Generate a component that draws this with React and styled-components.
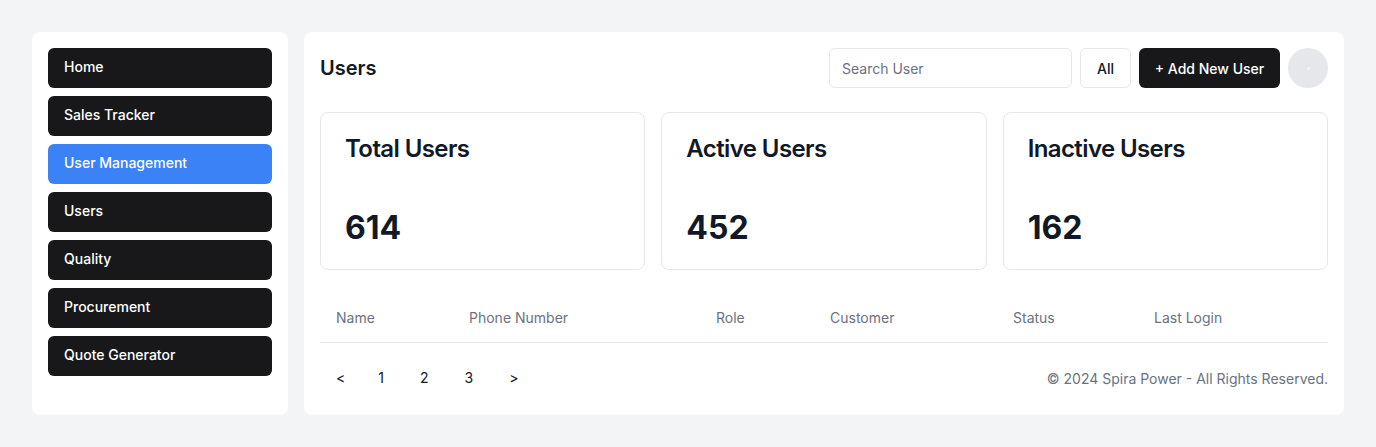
import React from "react"
import styled, { createGlobalStyle } from "styled-components"

const GlobalStyle = createGlobalStyle`
	* { box-sizing: border-box; }
	body {
		margin: 0;
		background: #f3f4f6;
		font-family: Inter, "Noto Sans", sans-serif;
		color: #111827;
	}
`

const Page = styled.div`
	display: flex;
	gap: 16px;
	padding: 32px;
	align-items: stretch;
`

const Sidebar = styled.nav`
	width: 256px;
	flex-shrink: 0;
	background: #fff;
	border-radius: 8px;
	padding: 16px;
	display: flex;
	flex-direction: column;
	gap: 8px;
`

const NavButton = styled.button`
	height: 40px;
	border: none;
	border-radius: 6px;
	background: ${(p) => (p.active ? "#3b82f6" : "#18181b")};
	color: #fff;
	font-family: inherit;
	font-size: 14px;
	font-weight: 500;
	text-align: left;
	padding: 0 16px 3px;
`

const Main = styled.main`
	flex: 1;
	background: #fff;
	border-radius: 8px;
	padding: 16px 16px 19px;
	display: flex;
	flex-direction: column;
`

const Header = styled.div`
	display: flex;
	align-items: center;
	justify-content: space-between;
	height: 40px;
`

const Title = styled.h1`
	margin: 0;
	font-size: 20px;
	font-weight: 600;
`

const Actions = styled.div`
	display: flex;
	align-items: center;
	gap: 8px;
`

const SearchInput = styled.input`
	width: 243px;
	height: 40px;
	border: 1px solid #e5e7eb;
	border-radius: 6px;
	padding: 0 12px;
	font-family: inherit;
	font-size: 14px;
	color: #111827;
	&::placeholder { color: #6b7280; }
`

const OutlineButton = styled.button`
	height: 40px;
	width: 51px;
	border: 1px solid #e5e7eb;
	border-radius: 6px;
	background: #fff;
	font-family: inherit;
	font-size: 14px;
	font-weight: 500;
	color: #111827;
`

const DarkButton = styled.button`
	height: 40px;
	width: 141px;
	border: none;
	border-radius: 6px;
	background: #18181b;
	color: #fff;
	font-family: inherit;
	font-size: 14px;
	font-weight: 500;
`

const Avatar = styled.div`
	width: 40px;
	height: 40px;
	border-radius: 50%;
	background: #e5e7eb;
	display: flex;
	align-items: center;
	justify-content: center;
	&::after {
		content: "";
		width: 3px;
		height: 3px;
		border-radius: 50%;
		background: #f3f4f6;
	}
`

const Cards = styled.div`
	display: grid;
	grid-template-columns: repeat(3, 1fr);
	gap: 16px;
	margin-top: 24px;
`

const Card = styled.div`
	border: 1px solid #e5e7eb;
	border-radius: 8px;
	padding: 20px 24px 21px;
	height: 158px;
	display: flex;
	flex-direction: column;
	justify-content: space-between;
`

const CardTitle = styled.h2`
	margin: 0;
	font-size: 24px;
	font-weight: 600;
	line-height: 32px;
	letter-spacing: -0.6px;
`

const CardValue = styled.div`
	font-size: 32px;
	font-weight: 700;
	line-height: 40px;
`

const Table = styled.table`
	width: 100%;
	border-collapse: collapse;
	margin-top: 28px;
	table-layout: fixed;
`

const Th = styled.th`
	text-align: left;
	font-size: 14px;
	font-weight: 400;
	color: #6b7280;
	padding: 10px 16px 14px;
	line-height: 20px;
	border-bottom: 1px solid #e5e7eb;
	width: ${(p) => p.w || "auto"};
`

const Footer = styled.div`
	display: flex;
	align-items: center;
	justify-content: space-between;
	margin-top: 17px;
`

const Pager = styled.div`
	display: flex;
	gap: 4px;
`

const PageButton = styled.button`
	background: none;
	border: none;
	font-family: inherit;
	font-size: 14px;
	color: #111827;
	padding: 8px 16px;
	line-height: 20px;
	&:first-child { padding-right: 13px; }
`

const Copy = styled.div`
	font-size: 14px;
	color: #6b7280;
`

const nav = ["Home", "Sales Tracker", "User Management", "Users", "Quality", "Procurement", "Quote Generator"]
const stats = [
	["Total Users", 614],
	["Active Users", 452],
	["Inactive Users", 162],
]
const cols = [
	["Name", "133px"],
	["Phone Number", "247px"],
	["Role", "114px"],
	["Customer", "183px"],
	["Status", "141px"],
	["Last Login", "auto"],
]

const App = () => {
	return (
		<>
			<GlobalStyle />
			<Page>
				<Sidebar>
					{nav.map((n) => (
						<NavButton key={n} active={n === "User Management"}>
							{n}
						</NavButton>
					))}
				</Sidebar>
				<Main>
					<Header>
						<Title>Users</Title>
						<Actions>
							<SearchInput placeholder="Search User" />
							<OutlineButton>All</OutlineButton>
							<DarkButton>+ Add New User</DarkButton>
							<Avatar />
						</Actions>
					</Header>
					<Cards>
						{stats.map(([t, v]) => (
							<Card key={t}>
								<CardTitle>{t}</CardTitle>
								<CardValue>{v}</CardValue>
							</Card>
						))}
					</Cards>
					<Table>
						<thead>
							<tr>
								{cols.map(([c, w]) => (
									<Th key={c} w={w}>
										{c}
									</Th>
								))}
							</tr>
						</thead>
						<tbody></tbody>
					</Table>
					<Footer>
						<Pager>
							<PageButton>&lt;</PageButton>
							<PageButton>1</PageButton>
							<PageButton>2</PageButton>
							<PageButton>3</PageButton>
							<PageButton>&gt;</PageButton>
						</Pager>
						<Copy>© 2024 Spira Power - All Rights Reserved.</Copy>
					</Footer>
				</Main>
			</Page>
		</>
	)
}

export default App
